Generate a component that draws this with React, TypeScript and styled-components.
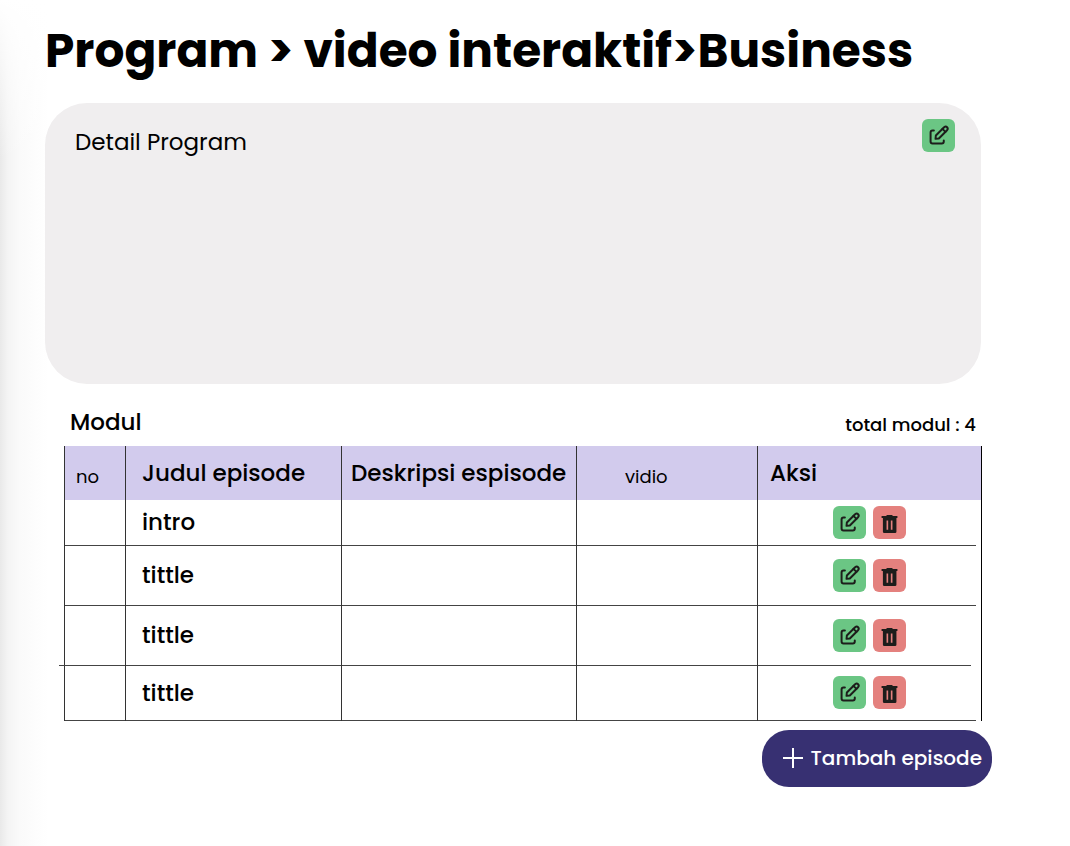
import React from "react";
import styled, { createGlobalStyle } from "styled-components";

const GlobalStyle = createGlobalStyle`
  *, *::before, *::after { box-sizing: border-box; }
  body {
    margin: 0;
    background: #fff;
    color: #000;
    font-family: Poppins, Inter, "Open Sans", sans-serif;
  }
  button { font: inherit; cursor: pointer; }
`;

const Page = styled.main`
  min-height: 100vh;
  padding: 20px 78px 59px 45px;
  background:
    linear-gradient(180deg, #fff 0, rgba(255, 255, 255, 0) 160px),
    linear-gradient(90deg, #e9e9e9 0, #f4f4f4 8px, #fafafa 20px, #fff 48px);
`;

const Title = styled.h1`
  margin: 0 0 21px;
  font-size: 47px;
  line-height: 62px;
  font-weight: 700;
  white-space: nowrap;
`;

const DetailCard = styled.section`
  display: flex;
  justify-content: space-between;
  align-items: flex-start;
  min-height: 281px;
  margin-right: 11px;
  padding: 16px 26px 16px 30px;
  border-radius: 42px;
  background: #f0eeef;
`;

const CardTitle = styled.h2`
  margin: 8px 0 0;
  font-size: 23px;
  line-height: 30px;
  font-weight: 400;
`;

const ModuleSection = styled.section`
  margin: 22px 10px 0 19px;
`;

const ModuleHeader = styled.div`
  display: flex;
  justify-content: space-between;
  height: 40px;
  padding: 0 6px;
`;

const ModuleTitle = styled.h2`
  margin: 0;
  font-size: 23px;
  line-height: 32px;
  font-weight: 500;
`;

const ModuleTotal = styled.span`
  padding-top: 3px;
  font-size: 18px;
  line-height: 32px;
  font-weight: 500;
`;

const Table = styled.table`
  width: 100%;
  table-layout: fixed;
  border-collapse: separate;
  border-spacing: 0;
  font-size: 23px;
  line-height: 32px;
  font-weight: 500;
`;

const Column = styled.col<{ $width?: number }>`
  width: ${({ $width }) => ($width ? `${$width}px` : "auto")};
`;

const HeadCell = styled.th<{ $indent: number; $small?: boolean }>`
  height: 54px;
  padding: ${({ $small }) => ($small ? "8px" : "0")} 0 0 ${({ $indent }) => $indent}px;
  border-left: 1px solid #333;
  background: #d2cbed;
  font-size: ${({ $small }) => ($small ? "18px" : "23px")};
  font-weight: ${({ $small }) => ($small ? 400 : 500)};
  text-align: left;
  white-space: nowrap;

  &:last-child { border-right: 1px solid #000; }
`;

const Row = styled.tr<{ $height: number }>`
  height: ${({ $height }) => $height}px;
`;

const Cell = styled.td<{ $indent?: number; $overhang?: boolean }>`
  position: relative;
  padding: 0 0 2px ${({ $indent = 0 }) => $indent}px;
  border-left: 1px solid #333;
  background: linear-gradient(#444, #444) left bottom / 100% 1px no-repeat;

  &:last-child {
    border-right: 1px solid #000;
    background-size: calc(100% - ${({ $overhang }) => ($overhang ? 10 : 5)}px) 1px;
  }

  &:first-child::before {
    content: "";
    display: ${({ $overhang }) => ($overhang ? "block" : "none")};
    position: absolute;
    right: 100%;
    bottom: 0;
    width: 6px;
    height: 1px;
    background: #444;
  }
`;

const Actions = styled.div`
  display: flex;
  gap: 7px;
`;

const IconButton = styled.button<{ $tone: "edit" | "remove" }>`
  display: block;
  width: 33px;
  height: 33px;
  padding: 0;
  border: 0;
  border-radius: 6px;
  background: ${({ $tone }) => ($tone === "edit" ? "#6bc684" : "#e4817e")};
  color: #1d1d1b;

  svg { display: block; width: 100%; height: 100%; }
`;

const AddButton = styled.button`
  display: flex;
  align-items: center;
  gap: 8px;
  height: 57px;
  margin: 9px 0 0 auto;
  padding: 0 10px 2px 21px;
  border: 0;
  border-radius: 27px;
  background: #373072;
  color: #fff;
  font-size: 20px;
  line-height: 30px;
  font-weight: 500;
  white-space: nowrap;
`;

const EditIcon = () => (
  <svg viewBox="0 0 100 100" fill="none" stroke="currentColor" strokeWidth="6" strokeLinecap="round" strokeLinejoin="round" aria-hidden="true">
    <path d="M36 35h-4q-6 0-6 6v27q0 6 6 6h28q6 0 6-6v-3" />
    <path d="M41 60l1-10 25-25q5-4 9 0t0 9L51 59z" />
    <path d="M62 30l9 9" />
  </svg>
);

const TrashIcon = () => (
  <svg viewBox="0 0 100 100" fill="currentColor" aria-hidden="true">
    <path d="M41 27h18v3h15v6H26v-6h15z" />
    <path fillRule="evenodd" d="M30 36h41v42q0 4-4 4H34q-4 0-4-4zM41 44v28h5V44zM54 44v28h5V44z" />
  </svg>
);

const PlusIcon = () => (
  <svg width="20" height="20" viewBox="0 0 20 20" stroke="currentColor" strokeWidth="2" aria-hidden="true">
    <path d="M10 0v20M0 10h20" />
  </svg>
);

const episodes = [
  { title: "intro", height: 46 },
  { title: "tittle", height: 60 },
  { title: "tittle", height: 60, overhang: true },
  { title: "tittle", height: 55 },
];

export default function App() {
  return (
    <>
      <GlobalStyle />
      <Page>
        <Title>Program &gt; video interaktif&gt;Business</Title>
        <DetailCard>
          <CardTitle>Detail Program</CardTitle>
          <IconButton type="button" $tone="edit" aria-label="Edit program">
            <EditIcon />
          </IconButton>
        </DetailCard>
        <ModuleSection>
          <ModuleHeader>
            <ModuleTitle>Modul</ModuleTitle>
            <ModuleTotal>total modul : 4</ModuleTotal>
          </ModuleHeader>
          <Table>
            <colgroup>
              <Column $width={61} />
              <Column $width={216} />
              <Column $width={235} />
              <Column $width={181} />
              <Column />
            </colgroup>
            <thead>
              <tr>
                <HeadCell scope="col" $indent={11} $small>no</HeadCell>
                <HeadCell scope="col" $indent={16}>Judul episode</HeadCell>
                <HeadCell scope="col" $indent={9}>Deskripsi espisode</HeadCell>
                <HeadCell scope="col" $indent={48} $small>vidio</HeadCell>
                <HeadCell scope="col" $indent={12}>Aksi</HeadCell>
              </tr>
            </thead>
            <tbody>
              {episodes.map(({ title, height, overhang }, index) => (
                <Row key={index} $height={height}>
                  <Cell $overhang={overhang} />
                  <Cell $indent={16}>{title}</Cell>
                  <Cell />
                  <Cell />
                  <Cell $indent={75} $overhang={overhang}>
                    <Actions>
                      <IconButton type="button" $tone="edit" aria-label={`Edit ${title}`}>
                        <EditIcon />
                      </IconButton>
                      <IconButton type="button" $tone="remove" aria-label={`Hapus ${title}`}>
                        <TrashIcon />
                      </IconButton>
                    </Actions>
                  </Cell>
                </Row>
              ))}
            </tbody>
          </Table>
        </ModuleSection>
        <AddButton type="button">
          <PlusIcon />
          Tambah episode
        </AddButton>
      </Page>
    </>
  );
}
